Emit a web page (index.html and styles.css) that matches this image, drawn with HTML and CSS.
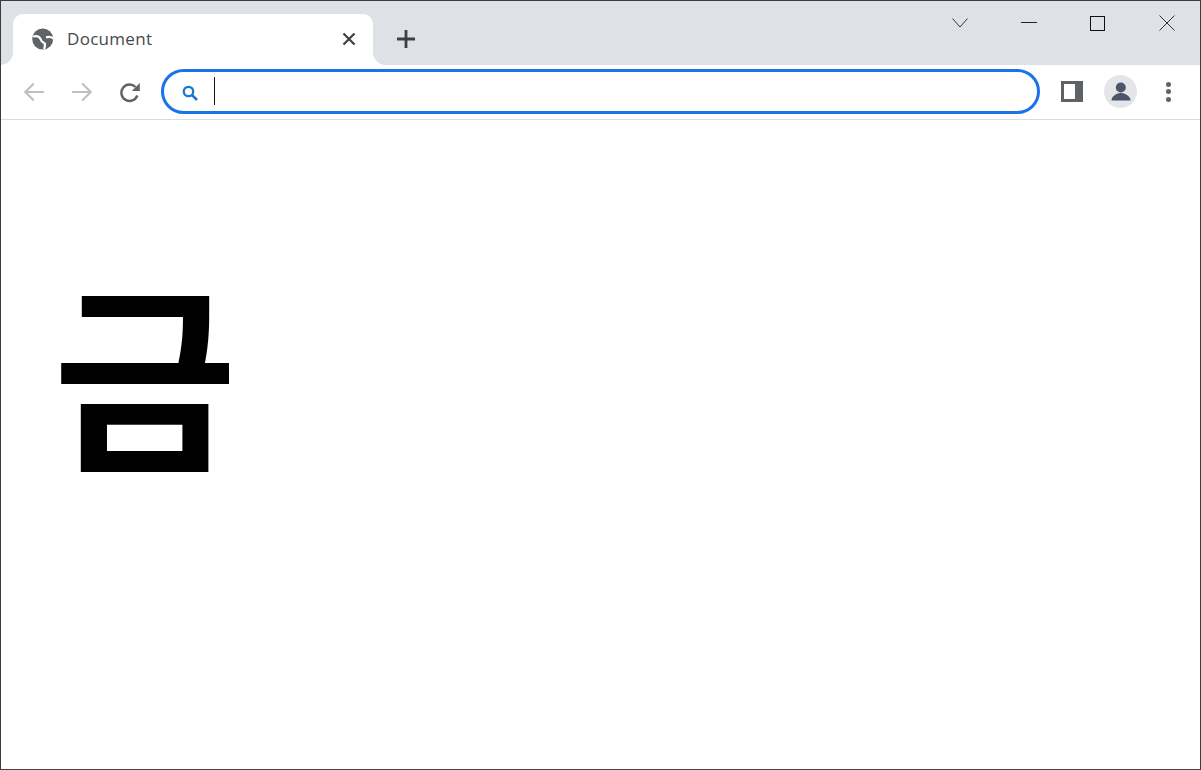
FILE: index.html
```html
<!DOCTYPE html>
<html lang="ko">
  <head>
    <meta charset="UTF-8" />
    <meta name="viewport" content="width=device-width, initial-scale=1.0" />
    <title>Document</title>
    <link rel="stylesheet" href="styles.css">
  </head>
  <body>
    <div class="window">
      <div class="tabstrip">
        <div class="tab">
          <svg class="tab-icon" viewBox="0 0 22 22" width="22" height="22">
            <circle cx="10.700" cy="11" r="10.500" fill="#5f6368" />
            <path d="M1 8.500C5 7.500 8 9 9 12s4 2 4 4.500-1 4.500-1 4.500M21.500 10.500c-2-1.500-5-2-7.500-1" stroke="#fff" stroke-width="2.300" fill="none" />
          </svg>
          <span class="tab-title">Document</span>
          <svg class="tab-close" viewBox="0 0 14 14" width="14" height="14">
            <path d="M1.500 1.500l11 11M12.500 1.500l-11 11" stroke="#3c4043" stroke-width="2.200" fill="none" />
          </svg>
        </div>
        <svg class="new-tab" viewBox="0 0 18 18" width="18" height="18">
          <path d="M9 0v18M0 9h18" stroke="#3c4043" stroke-width="2.800" fill="none" />
        </svg>
        <div class="window-controls">
          <button class="win-btn">
            <svg viewBox="0 0 16 10" width="16" height="10"><path d="M.5 .5L8 9l7.500-8.500" stroke="#333" fill="none" /></svg>
          </button>
          <button class="win-btn">
            <svg viewBox="0 0 16 2" width="16" height="2"><path d="M0 .5h16" stroke="#222" fill="none" /></svg>
          </button>
          <button class="win-btn">
            <svg viewBox="0 0 15 15" width="15" height="15"><rect x=".5" y=".5" width="14" height="14" stroke="#111" fill="none" /></svg>
          </button>
          <button class="win-btn">
            <svg viewBox="0 0 16 16" width="16" height="16"><path d="M.5.5l15 15M15.500.5l-15 15" stroke="#333" fill="none" /></svg>
          </button>
        </div>
      </div>
      <div class="toolbar">
        <svg class="nav-icon" viewBox="0 0 22 20" width="22" height="20">
          <path d="M21 10H2.500M10.800 1.500L2.300 10l8.500 8.500" stroke="#bdc1c6" stroke-width="2.200" fill="none" />
        </svg>
        <svg class="nav-icon" viewBox="0 0 22 20" width="22" height="20">
          <path d="M1 10h18.500M11.200 1.500l8.500 8.500-8.500 8.500" stroke="#bdc1c6" stroke-width="2.200" fill="none" />
        </svg>
        <svg class="nav-icon" viewBox="0 0 22 22" width="22" height="22">
          <path d="M18.300 14.500A8.200 8.200 0 1 1 16.500 6" stroke="#5f6368" stroke-width="2.400" fill="none" />
          <path d="M20.800 2v8h-8z" fill="#5f6368" />
        </svg>
        <div class="omnibox">
          <svg class="search-icon" viewBox="0 0 16 16" width="16" height="16">
            <circle cx="6.500" cy="6.500" r="4.700" stroke="#1976d2" stroke-width="2.300" fill="none" />
            <path d="M10 10l5 5" stroke="#1976d2" stroke-width="2.500" fill="none" />
          </svg>
          <span class="caret"></span>
        </div>
        <div class="side-panel"><span class="side-panel-inner"></span></div>
        <div class="avatar">
          <svg viewBox="0 0 20 20" width="20" height="20">
            <circle cx="9.800" cy="5.500" r="5" fill="#4d5669" />
            <path d="M.5 18.500c0-5 6-7.500 9.300-7.500s9.700 2.500 9.700 7.500z" fill="#4d5669" />
          </svg>
        </div>
        <div class="menu-dots"><span></span><span></span><span></span></div>
      </div>
      <main class="page">
        <h1 class="big-word">금</h1>
      </main>
    </div>
  </body>
</html>
```

FILE: styles.css
```css
* {
  box-sizing: border-box;
}
html, body {
  height: 100%;
}
body {
  margin: 0;
  font-family: "Open Sans", sans-serif;
  background-color: #fff;
}
.window {
  height: 100%;
  display: flex;
  flex-direction: column;
  border: 1px solid #3c3c3c;
  border-bottom-color: #444;
}
.tabstrip {
  height: 64px;
  flex: none;
  display: flex;
  align-items: flex-end;
  padding-left: 12px;
  background-color: #dee1e6;
}
.tab {
  position: relative;
  width: 360px;
  height: 51px;
  display: flex;
  align-items: center;
  padding: 0 17px 1px 19px;
  background-color: #fff;
  border-radius: 10px 10px 0 0;
}
.tab::before,
.tab::after {
  content: "";
  position: absolute;
  bottom: 0;
  width: 12px;
  height: 12px;
}
.tab::before {
  left: -12px;
  background: radial-gradient(circle at 0 0, #dee1e6 11.500px, #fff 12px);
}
.tab::after {
  right: -12px;
  background: radial-gradient(circle at 100% 0, #dee1e6 11.500px, #fff 12px);
}
.tab-title {
  flex: 1;
  margin-left: 13px;
  padding-bottom: 2px;
  font-size: 17px;
  letter-spacing: 0.3px;
  color: #45484c;
}
.new-tab {
  margin: 0 0 17px 24px;
}
.window-controls {
  margin-left: auto;
  align-self: flex-start;
  display: flex;
  gap: 36.800px;
  padding: 14px 17.500px 0 0;
}
.win-btn {
  width: 32px;
  height: 16px;
  padding: 0;
  border: 0;
  background: none;
  display: flex;
  align-items: center;
  justify-content: center;
}
.toolbar {
  height: 55px;
  flex: none;
  display: flex;
  align-items: center;
  padding: 0 0 1px 22px;
  background-color: #fff;
  border-bottom: 1px solid #dadce0;
}
.nav-icon {
  margin-right: 26px;
}
.nav-icon:nth-child(3) {
  margin-right: 20px;
}
.omnibox {
  width: 879px;
  height: 45px;
  display: flex;
  align-items: center;
  padding-left: 18px;
  border: 3px solid #1a73e8;
  border-radius: 23px;
}
.search-icon {
  margin: 2px 16px 0 0;
}
.caret {
  width: 1px;
  height: 28px;
  margin-bottom: 2px;
  background-color: #111;
}
.side-panel {
  width: 22px;
  height: 21px;
  margin-left: 21px;
  padding: 3px 8px 3px 3px;
  background-color: #5f6368;
}
.side-panel-inner {
  display: block;
  height: 100%;
  background-color: #fff;
}
.avatar {
  width: 33px;
  height: 33px;
  margin-left: 21px;
  display: flex;
  align-items: center;
  justify-content: center;
  border-radius: 50%;
  background-color: #e3e5e9;
}
.menu-dots {
  margin-left: 28.500px;
  display: flex;
  flex-direction: column;
  gap: 2.500px;
}
.menu-dots span {
  width: 5px;
  height: 5px;
  border-radius: 50%;
  background-color: #5f6368;
}
.page {
  flex: 1;
  padding: 129px 0 0 52px;
}
.big-word {
  margin: 0;
  font-family: "Noto Sans CJK KR", sans-serif;
  font-size: 200px;
  font-weight: 700;
  line-height: 1.2;
  color: #000;
}
```
